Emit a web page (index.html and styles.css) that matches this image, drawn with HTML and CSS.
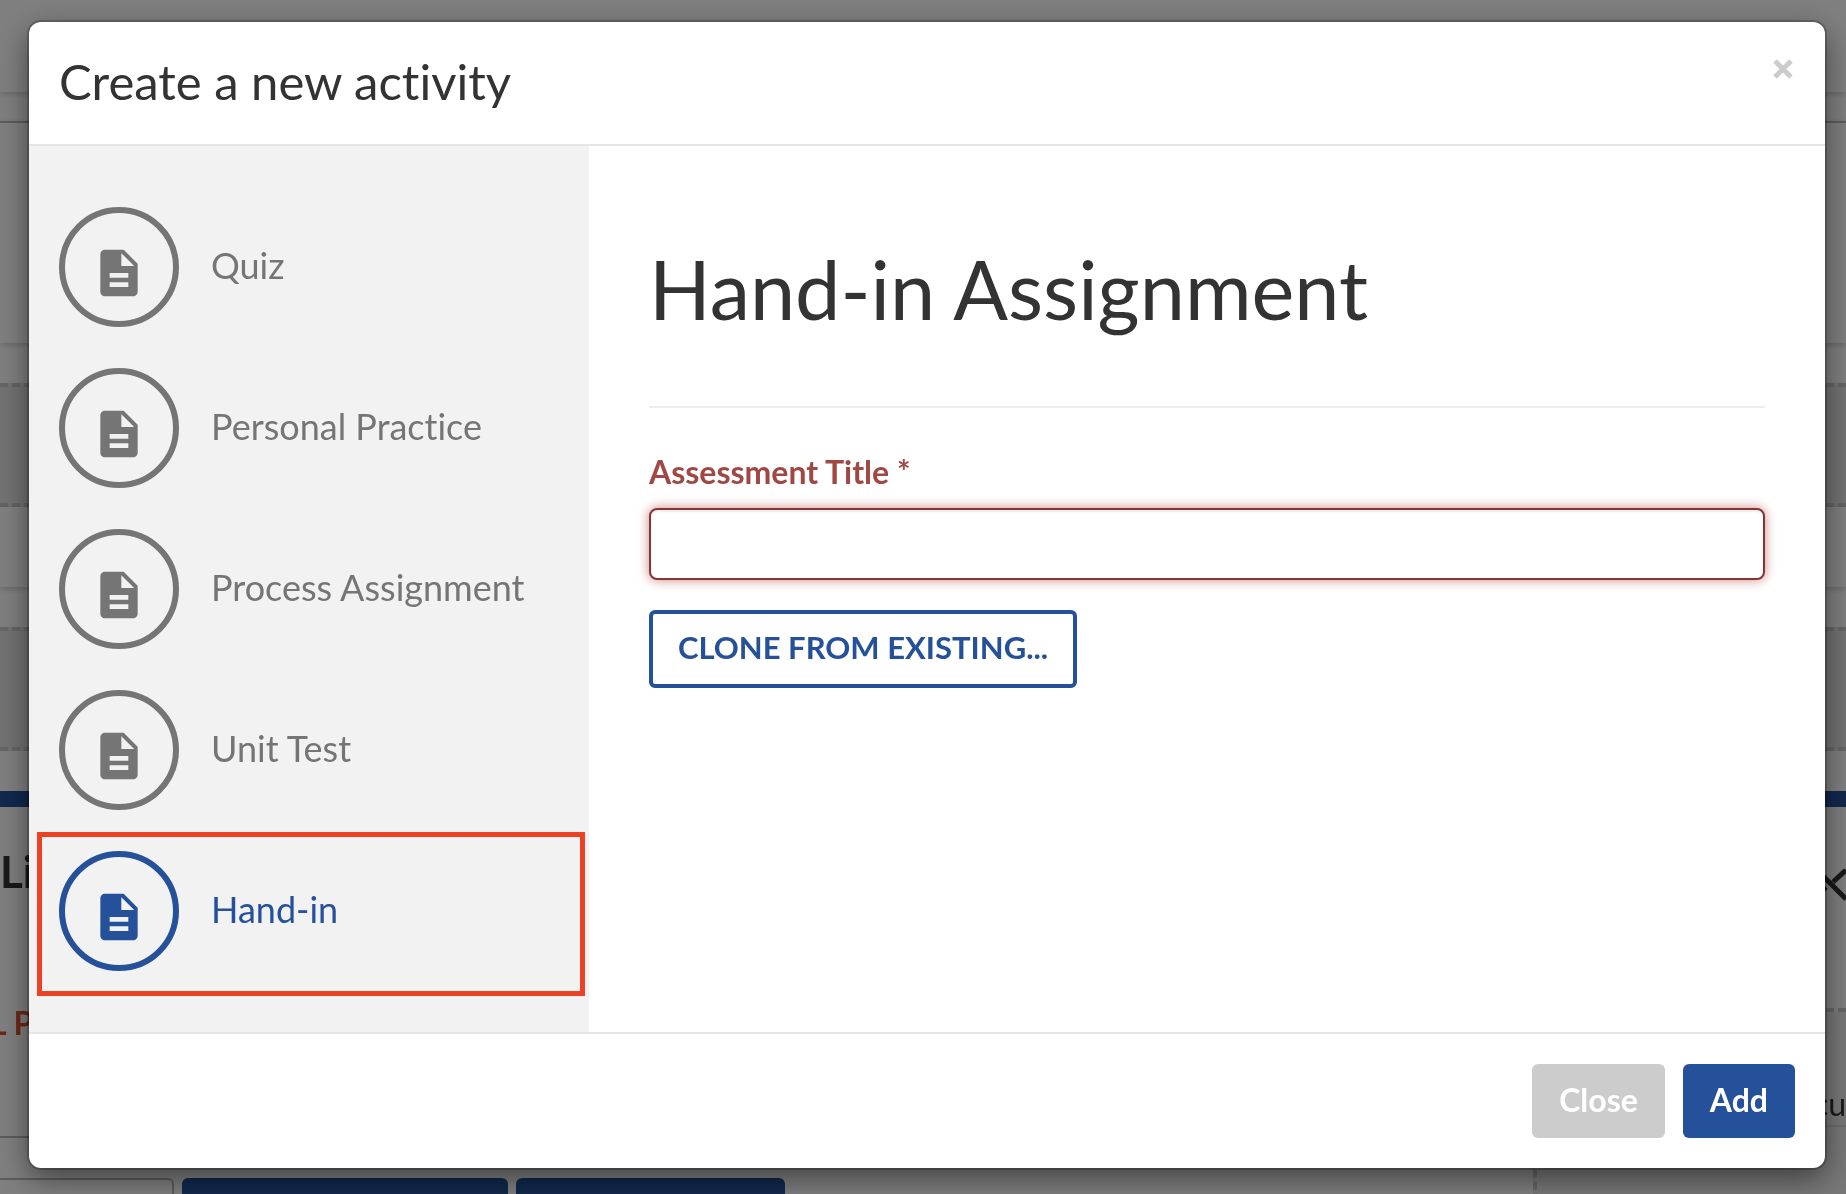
FILE: index.html
```
<!DOCTYPE html>
<html lang="en">
<head>
  <meta charset="UTF-8">
  <title>Create a new activity</title>
  <link rel="stylesheet" href="styles.css">
</head>
<body>
  <svg class="sprite" aria-hidden="true">
    <symbol id="icon-doc" viewBox="0 0 24 24">
      <path d="M14 2H6c-1.100 0-1.990.9-1.990 2L4 20c0 1.100.89 2 1.990 2H18c1.100 0 2-.9 2-2V8l-6-6zm2 16H8v-2h8v2zm0-4H8v-2h8v2zm-3-5V3.500L18.500 9H13z"/>
    </symbol>
  </svg>

  <!-- Course page behind the modal -->
  <div class="page" aria-hidden="true">
    <div class="page-top"></div>
    <div class="page-panel page-panel-tall"></div>
    <div class="dropzone"></div>
    <div class="page-panel page-panel-short"></div>
    <div class="dropzone"></div>
    <div class="page-bar"></div>
    <div class="page-columns">
      <div class="page-main">
        <div class="page-heading">Li</div>
        <div class="page-warning">L P</div>
        <div class="page-actions">
          <span class="page-field"></span>
          <span class="page-button page-button-wide"></span>
          <span class="page-button"></span>
        </div>
      </div>
      <div class="page-side">
        <div class="page-tools">
          <svg class="icon-tools" viewBox="0 0 36 32"><path d="M8 2l28 28M36 1L23 13M16 18L4 30"/></svg>
        </div>
        <div class="page-note">cu</div>
      </div>
    </div>
  </div>

  <div class="backdrop">
    <div class="modal" role="dialog" aria-labelledby="modal-title">
      <div class="modal-header">
        <h2 id="modal-title">Create a new activity</h2>
        <button type="button" class="dismiss" aria-label="Close dialog">
          <svg viewBox="0 0 20 20"><path d="M2 2l16 16M18 2L2 18"/></svg>
        </button>
      </div>

      <div class="modal-body">
        <nav class="types">
          <a href="#quiz" class="type"><span class="type-icon"><svg><use href="#icon-doc"/></svg></span><span class="type-name">Quiz</span></a>
          <a href="#practice" class="type"><span class="type-icon"><svg><use href="#icon-doc"/></svg></span><span class="type-name">Personal Practice</span></a>
          <a href="#process" class="type"><span class="type-icon"><svg><use href="#icon-doc"/></svg></span><span class="type-name">Process Assignment</span></a>
          <a href="#unit-test" class="type"><span class="type-icon"><svg><use href="#icon-doc"/></svg></span><span class="type-name">Unit Test</span></a>
          <a href="#hand-in" class="type active"><span class="type-icon"><svg><use href="#icon-doc"/></svg></span><span class="type-name">Hand-in</span></a>
        </nav>

        <form class="details">
          <h1>Hand-in Assignment</h1>
          <label for="assessment-title">Assessment Title *</label>
          <input type="text" id="assessment-title" required>
          <button type="button" class="btn btn-outline">CLONE FROM EXISTING...</button>
        </form>
      </div>

      <div class="modal-footer">
        <button type="button" class="btn btn-default">Close</button>
        <button type="button" class="btn btn-primary">Add</button>
      </div>
    </div>
  </div>
</body>
</html>
```

FILE: styles.css
```
* {
  box-sizing: border-box;
}

body {
  margin: 0;
  font-family: Lato, "Liberation Sans", sans-serif;
  font-size: 32px;
  font-variant-ligatures: none;
  color: #333;
  background-color: #fff;
}

.sprite {
  display: none;
}

/* page behind the modal */
.page {
  position: fixed;
  inset: 0;
  overflow: hidden;
  display: flex;
  flex-direction: column;
}

.page-top {
  flex: none;
  height: 92px;
  box-shadow: 0 2px 6px rgba(0, 0, 0, 0.2);
}

.page-panel {
  flex: none;
  margin-bottom: 40px;
  box-shadow: 0 2px 6px rgba(0, 0, 0, 0.2);
}

.page-panel-tall {
  height: 222px;
  margin-top: 29px;
  border-top: 2px solid #bbb;
}

.page-panel-short {
  height: 80px;
}

.dropzone {
  flex: none;
  height: 124px;
  background-color: #e6e6e6;
  border: dashed #ccc;
  border-width: 4px 0;
}

.page-bar {
  flex: none;
  height: 16px;
  margin-top: 40px;
  background-color: #25509a;
}

.page-columns {
  flex: 1;
  display: flex;
}

.page-main {
  flex: 1;
}

.page-heading {
  height: 184px;
  padding-top: 38px;
  font-size: 44px;
  line-height: 52px;
  font-weight: 700;
}

.page-warning {
  height: 147px;
  margin-left: -10px;
  padding-top: 14px;
  line-height: 36px;
  font-weight: 700;
  color: #d9502f;
  border-bottom: 2px solid #bbb;
}

.page-actions {
  display: flex;
  gap: 8px;
  margin-top: 40px;
}

.page-field {
  width: 174px;
  height: 60px;
  border: 2px solid #bbb;
  border-left: 0;
  border-radius: 0 6px 6px 0;
}

.page-button {
  width: 269px;
  height: 60px;
  border-radius: 6px;
  background-color: #25509a;
}

.page-button-wide {
  width: 326px;
}

.page-side {
  width: 313px;
  border-left: 4px dashed #ccc;
  background-color: #f0f0f0;
}

.page-tools {
  height: 205px;
  padding-top: 62px;
  text-align: right;
  border-bottom: 4px dashed #ccc;
  background-color: #fff;
}

.icon-tools {
  width: 36px;
  height: 32px;
  fill: none;
  stroke: #333;
  stroke-width: 5;
}

.page-note {
  height: 115px;
  padding-top: 74px;
  line-height: 36px;
  text-align: right;
  border-bottom: 2px solid #ddd;
}

/* modal */
.backdrop {
  position: fixed;
  inset: 0;
  padding: 22px 21px 26px 29px;
  background-color: rgba(0, 0, 0, 0.5);
}

.modal {
  border-radius: 12px;
  background-color: #fff;
  box-shadow: 0 0 0 2px rgba(0, 0, 0, 0.2), 0 10px 30px rgba(0, 0, 0, 0.5);
}

.modal-header {
  display: flex;
  justify-content: space-between;
  align-items: flex-start;
  padding: 28px 30px 32px;
  border-bottom: 2px solid #e5e5e5;
}

.modal-header h2 {
  margin: 0;
  font-size: 49px;
  line-height: 62px;
  font-weight: 400;
}

.dismiss {
  width: 24px;
  height: 38px;
  padding: 0;
  border: 0;
  background: none;
  cursor: pointer;
}

.dismiss svg {
  display: block;
  width: 20px;
  height: 20px;
  margin: auto;
  fill: none;
  stroke: #ccc;
  stroke-width: 5;
}

.modal-body {
  display: flex;
}

.types {
  width: 560px;
  padding: 61px 30px;
  display: flex;
  flex-direction: column;
  gap: 41px;
  background-color: #f2f2f2;
}

.type {
  position: relative;
  display: flex;
  align-items: center;
  gap: 32px;
  font-size: 36px;
  color: #757575;
  text-decoration: none;
}

.type-icon {
  width: 120px;
  height: 120px;
  padding-top: 12px;
  display: flex;
  align-items: center;
  justify-content: center;
  border: 6px solid #757575;
  border-radius: 50%;
}

.type-icon svg {
  width: 56px;
  height: 56px;
  fill: #757575;
}

.type-name {
  padding-bottom: 4px;
}

.type.active {
  color: #25509a;
}

.type.active .type-icon {
  border-color: #25509a;
}

.type.active svg {
  fill: #25509a;
}

/* highlight frame around the selected type */
.type.active::after {
  content: "";
  position: absolute;
  inset: -19px -26px -25px -22px;
  border: 5px solid #ec4125;
}

.details {
  flex: 1;
  padding: 88px 60px 60px;
}

.details h1 {
  margin: 0 0 44px;
  padding-bottom: 62px;
  font-size: 81px;
  line-height: 110px;
  font-weight: 400;
  border-bottom: 2px solid #eee;
}

.details label {
  display: block;
  margin-bottom: 16px;
  line-height: 40px;
  font-weight: 700;
  color: #a04843;
}

.details input {
  display: block;
  width: 100%;
  height: 72px;
  margin-bottom: 30px;
  padding: 12px 24px;
  font: inherit;
  border: 2px solid #843534;
  border-radius: 8px;
  outline: none;
  box-shadow: inset 0 2px 2px rgba(0, 0, 0, 0.08), 0 0 12px #ce8483;
}

.btn {
  height: 74px;
  padding: 0 27px 4px;
  font-family: inherit;
  font-size: 32px;
  font-weight: 700;
  color: #fff;
  border: 0;
  border-radius: 6px;
  cursor: pointer;
}

.btn-outline {
  height: 78px;
  padding: 0 25px 4px;
  font-size: 31px;
  color: #25509a;
  border: 4px solid #25509a;
  background-color: #fff;
}

.btn-default {
  background-color: #ccc;
}

.btn-primary {
  background-color: #25509a;
}

.modal-footer {
  display: flex;
  justify-content: flex-end;
  gap: 18px;
  padding: 30px;
  border-top: 2px solid #e5e5e5;
}
```
